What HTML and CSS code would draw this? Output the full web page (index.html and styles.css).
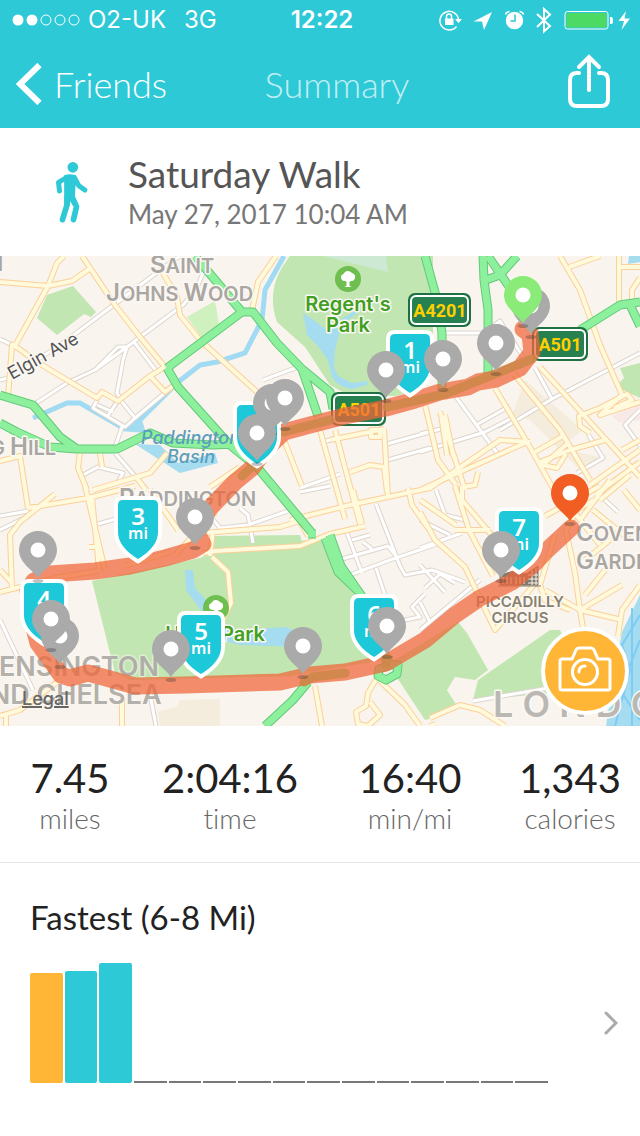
FILE: index.html
```html
<!DOCTYPE html>
<html lang="en">
<head>
<meta charset="utf-8">
<meta name="viewport" content="width=device-width, initial-scale=1">
<title>Summary</title>
<link rel="stylesheet" href="styles.css">
</head>
<body>
<header class="top">
  <div class="status">
    <div class="status-left">
      <svg class="signal" viewBox="0 0 68 12" aria-hidden="true"><g class="sig-full"><circle cx="6" cy="6" r="5.500"/><circle cx="20" cy="6" r="5.500"/></g><g class="sig-empty"><circle cx="34" cy="6" r="5"/><circle cx="48" cy="6" r="5"/><circle cx="62" cy="6" r="5"/></g></svg>
      <span>O2-UK</span><span class="net">3G</span>
    </div>
    <span class="clock">12:22</span>
    <svg class="status-icons" viewBox="438 6 194 28" aria-hidden="true">
      <g class="line"><path d="M456.500 26.500a9.300 9.300 0 1 1 2-6.500"/><path d="M446.500 19v-2.500a2.500 2.500 0 0 1 5 0V19"/></g>
      <path class="solid" d="M445 18.500h8.500V25H445zM455 19h7l-3.500 4.300zM473.500 21.500 492 12l-8 18-2-8.500z"/>
      <circle class="solid" cx="514.500" cy="20.500" r="8.700"/>
      <path class="cut" d="M515 14.500v6.500h-4.500"/>
      <path class="line" d="M505.500 14.500q.5-2.500 4-3M523.500 14.500q-.5-2.500-4-3"/>
      <path class="bt" d="M537 14l13 12-6 5.500V9l6 5.500L537 27"/>
      <rect class="batt" x="565" y="11.500" width="43" height="17.500" rx="2.500"/><rect class="charge" x="566.500" y="13" width="40" height="14.500" rx="1"/>
      <path class="solid" d="M610 17h1.500q1.500 0 1.500 3.500t-1.500 3.500H610zM626 11l-7.500 10h5.500L621.500 30 630 18.500h-5.500z"/>
    </svg>
  </div>
  <nav class="bar">
    <a class="back" href="#friends"><svg viewBox="0 0 26 42" aria-hidden="true"><path d="M23.500 2 4 21l19.500 19"/></svg>Friends</a>
    <h1>Summary</h1>
    <button class="share" type="button" aria-label="Share"><svg viewBox="0 0 42 54" aria-hidden="true"><path d="M11 19H9q-7 0-7 7v19q0 7 7 7h24q7 0 7-7V26q0-7-7-7h-2M21 36V3M11 13 21 3l10 10"/></svg></button>
  </nav>
</header>
<main>
<section class="activity">
  <svg class="walker" viewBox="165 482 98 186" aria-hidden="true"><circle cx="218" cy="501" r="16"/><path class="torso" d="M192 525q17-6 34 0l6 18-6 14-2 36 6 17-11 7-11-17-4 15-12-4z"/><path class="limb" d="M199 532l-24 14 3 26M222 531l14 25 18 13"/><path class="leg" d="M201 590v22l-14 46M217 592l12 27-9 39"/></svg>
  <div><h2>Saturday Walk</h2><p>May 27, 2017 10:04 AM</p></div>
</section>
<section class="map" aria-label="Route map">
<svg class="map-art" viewBox="0 256 640 470" preserveAspectRatio="xMidYMid slice" role="img" aria-label="Walking route through central London">
<defs>
  <g id="white-roads">
    <path d="M33 405 67 383 95 370 127 347 140 337 183 305 196 290 210 256M127 347 123 360 117 393 122 402 135 418M95 370 118 347 127 347M0 380 12 377 67 340 103 313 155 274 180 256M0 339 12 345M134 342 157 372M97 400 93 408 125 427 135 418 173 386M117 402 107 417M122 427 115 447M97 405 113 412M83 475 98 467 123 473 117 484M115 453 147 490"/>
    <path d="M263 380 298 367M320 443 340 437M383 445 430 432M384 461 430 448M300 488 340 474M445 333 485 333 500 321 525 360M420 434 445 428M420 452 485 432 512 418M478 424 510 406M456 397 500 457M535 368 552 399 500 430M552 399 640 353M588 434 603 458 577 473M640 410 625 425 640 446"/>
    <path d="M0 516 28 511M0 530 30 515M98 524 130 515M0 620 33 690M150 694 156 726M212 518 220 528 248 525 288 511M240 508 248 515 253 543M300 492 330 486M346 530 362 573M352 540 370 535M376 504 400 566 405 575 432 570 465 582M342 559 388 546 396 556M350 575 390 560 440 543M363 542 372 549M376 568 388 604M400 621 420 617 412 607 425 594M425 588 440 574 455 583M420 520 450 535M436 490 445 515 465 520M420 548 462 533M420 630 480 580M420 565 445 592M473 701 560 686M605 500 618 512M420 602 430 622"/>
  </g>
  <g id="yellow-roads">
    <path d="M0 282 48 286 72 281 89 269M64 256 57 263 48 286 16 344 12 345 8 397M82 256 115 305 140 337 165 367M12 345 18 348 37 362 97 398 102 392 118 401 150 376 165 367M150 376 165 392 173 386M163 273 177 297 180 315 200 340 257 392M276 256 258 282 252 310M0 461 20 456 28 508M80 452 78 468 87 490M100 453 102 467M93 490 150 473 167 453M136 477 146 490"/>
    <path d="M0 592 60 577 98 571M55 494 20 522 10 535 12 590M0 570 12 583M28 508 88 498 135 486M85 486 105 570M92 498 99 569M89 547H100M125 566 170 552M0 716 20 710 60 680M6 715V726M122 700V726M175 555 215 512M150 490 178 530M203 533 280 527 303 520M203 553 216 551 300 546 330 534 365 526M212 557 228 572 231 603 220 625M213 530 210 556"/>
    <path d="M284 440 302 486M320 430 345 519M335 430 360 524M330 440 384 429M371 430H380V437H371ZM384 429 388 496M350 472 370 465 384 467M290 520 350 505 430 488 500 440 530 442M210 487 240 467M297 516 308 536M353 490 362 524M384 467 387 492M408 488 412 505 428 528"/>
    <path d="M425 405 438 460 456 485M440 412 465 490M441 414 447 455M456 460 453 455 445 415M420 490 527 442M463 487 475 485 478 472M495 388 527 442 554 490M514 374 560 430 590 480M540 367 600 433 640 477M560 256 580 290 600 345 622 395M569 267 600 256M619 256V306M619 267H640M640 278 632 290V303M535 452 563 436 568 443 543 465 557 468 566 454M590 433 580 426 579 416 600 408 627 394 632 400 614 408M605 440 570 450 540 462M622 395 600 415 640 402M590 485 640 450M595 495 640 462M622 450 640 440"/>
    <path d="M420 512 435 540 465 567 495 630 540 578M455 486 469 530 493 576M462 486V500L500 545M420 500 456 525M455 530 490 530M594 500 577 510 566 530 575 573 580 610 585 640M545 590 580 610 622 620M555 535 540 585 545 600 570 610M622 585 580 610M618 636 622 610 640 585M585 560 610 540M585 595 605 570M545 516 600 486M580 520 610 480M593 510 630 540M600 500 630 475M555 488 600 545M624 490 640 510M430 718 460 705 480 710 505 726M436 724 430 726M315 686 322 726M377 678 368 693 366 706 356 712 358 724 368 726 380 715 370 702M377 678 405 705 420 726"/>
  </g>
  <g id="green-roads">
    <path d="M0 395 33 405 60 437 77 449 117 449 150 433 173 443 213 445 234 444M0 423 17 432 50 447 77 449M195 256 242 312 253 312 277 343 302 369 330 392 333 409M167 368 242 312M167 368 178 387 230 445 257 467 312 533M302 369 318 416M308 534 316 534"/>
    <path d="M425 256 438 303 442 333V389M483 256 484 280 488 310V373M488 256 510 288 520 300M517 256 500 275 486 280M580 330 620 305 640 302M630 305 640 326M325 538 338 572 360 593M330 535 341 566 368 605M308 682 293 700 265 726"/>
    <path d="M388 656V666L379 669 378 676 386 680 397 674 398 665 388 664"/>
  </g>
  <g id="pin"><ellipse class="pin-shadow" cx="0" cy="31" rx="5.500" ry="2"/><path d="M0 28C-5 20-19 13-19 0A19 19 0 0 1 19 0C19 13 5 20 0 28Z"/><circle class="hole" r="7.500"/></g>
  <path id="shield" d="M-15 0H15Q20 0 20 5V32C20 45 8 54 0 59C-8 54-20 45-20 32V5Q-20 0-15 0Z"/>
  <g id="tree"><circle class="tree-bg" r="13"/><path class="tree-fg" d="M-1.500 7V2.500L-3 2A4 4 0 0 1-7-2A3 3 0 0 1-4.500-5A5 5 0 0 1 4-6A4 4 0 0 1 7-1Q6 2.500 3 2L1.500 3V7L4 8H-4Z"/></g>
</defs>
<rect class="land" y="256" width="640" height="470"/>
<path class="block" d="M525 380 550 402 583 430 570 440 577 452 603 458 580 470 530 420 512 415ZM158 712 177 707 180 700 220 699V726H160Z"/>
<path class="pink" d="M612 416 640 403V420L620 423Z"/>
<g class="park">
  <path d="M290 256C275 275 268 295 277 322L305 347 330 385 350 396H395L420 390 433 360V256Z"/>
  <path d="M37 318 47 295 73 286 96 312 91 317 84 314 57 335ZM92 581 200 558 212 553 300 541 323 538 346 580 372 610 383 660 290 676 130 680 115 673Z"/>
  <path d="M388 664 420 645 458 622 467 633 488 670 475 680 455 677 447 690 457 706 440 716 425 720Z"/><path d="M473 700 478 680 550 630 560 630 590 690Z"/><path d="M640 363 620 368 624 378 618 384 623 390 640 398Z"/><path d="M213 536 300 535 302 542 213 551Z"/>
</g>
<path class="park-light" d="M187 317 215 301 220 330 205 342Z"/><path class="park-pale" d="M323 256 388 272 386 256Z"/>
<g class="water">
  <path d="M303 313 307 335 317 345 328 360 332 377Q338 387 352 389L367 385 368 381 352 383 338 376 334 367 335 350 338 338 343 323 362 310 353 312 337 322 327 330 312 319ZM185 570 193 570 195 588 215 610 208 620 186 590ZM210 623 240 630 285 627 300 632 318 648 300 647 240 645 212 638ZM135 420 142 420 146 433 120 431ZM135 444 160 445 178 463 215 453 218 463 180 473ZM629 256H640V262L628 264Z"/>
  <path d="M640 595 622 632 613 680 606 726H640Z"/>
</g>
<path class="canal" d="M33 418 67 403 80 403 123 428 137 428M137 423 177 383 200 365 217 362 245 353 262 320 265 290 284 256"/>
<path class="river-lines" d="M640 615 622 645 630 670 615 726M632 608V726M640 640 620 690 640 720"/>
<use href="#white-roads" class="case white-case"/><use href="#white-roads" class="fill white-fill"/>
<use href="#yellow-roads" class="case yellow-case"/><use href="#yellow-roads" class="fill yellow-fill"/>
<use href="#green-roads" class="case green-case"/><use href="#green-roads" class="fill green-fill"/>
<g class="label area">
  <text x="150" y="273"><tspan class="cap">S</tspan>AINT</text><text x="106" y="301"><tspan class="cap">J</tspan>OHNS <tspan class="cap">W</tspan>OOD</text><text x="119" y="506"><tspan class="cap">P</tspan>ADDINGTON</text><text x="-10" y="455">G <tspan class="cap">H</tspan>ILL</text><text x="-12" y="271">N</text><text x="576" y="541"><tspan class="cap">C</tspan>OVENT</text><text x="576" y="569"><tspan class="cap">G</tspan>ARDEN</text>
</g>
<g class="label district"><text x="-20" y="676">KENSINGTON</text><text x="-30" y="704">AND CHELSEA</text></g>
<text class="label city" x="493" y="717">L O N D O N</text>
<text class="label street" transform="translate(12 380) rotate(-29)">Elgin Ave</text>
<g class="label water-label"><text x="141" y="444">Paddington</text><text x="167" y="463">Basin</text></g>
<g class="label park-label"><text x="348" y="311">Regent's</text><text x="348" y="332">Park</text><text x="215" y="641">Hyde Park</text></g>
<use href="#tree" x="348" y="279"/><use href="#tree" x="216" y="608"/>
<g class="sign"><g><rect class="sign-edge" x="409" y="294" width="61" height="32" rx="6"/><rect x="411" y="296" width="57" height="28" rx="5"/><text x="440" y="317">A4201</text></g><g><rect class="sign-edge" x="332" y="393" width="53" height="32" rx="6"/><rect x="334" y="395" width="49" height="28" rx="5"/><text x="359" y="416">A501</text></g><g><rect class="sign-edge" x="533" y="328" width="54" height="32" rx="6"/><rect x="535" y="330" width="50" height="28" rx="5"/><text x="560" y="351">A501</text></g></g>
<g class="piccadilly"><path d="M500 585v-10l14-4 12 3 12-8v19zM498 586h43"/><path class="windows" d="M503 577v7M507 577v7M511 577v7M516 577v7M520 577v7M524 577v7M528 575h10M528 579h10M528 583h10M532 570v15M536 568v17"/></g>
<g class="label place"><text x="520" y="607">PICCADILLY</text><text x="520" y="623">CIRCUS</text></g>
<path class="route" d="M523 329 530 334 532 352 520 368 496 379 478 382 468 387 440 392 415 400 386 408 345 416 310 425 284 432 264 451 252 468 235 482 210 508 195 530 203 544 193 550 165 558 130 566 95 571 50 574 34 581 28 590 32 620 38 643 51 661 61 675 70 678 88 673 110 679 135 686 185 685 280 682 310 675 345 672 386 663 425 640 455 615 480 598 512 582 535 563 545 552 571 528"/>
<path class="route-overlap" d="M284 432 330 420M387 407 445 394 532 359M242 476 264 456M304 682 313 677 345 673M386 656V664"/>
<g class="shields">
  <g transform="translate(410 334)"><use href="#shield"/><text y="25">1</text><text class="mi" y="39">mi</text></g>
  <g transform="translate(257 405)"><use href="#shield"/></g>
  <g transform="translate(138 500)"><use href="#shield"/><text y="25">3</text><text class="mi" y="39">mi</text></g>
  <g transform="translate(44 583)"><use href="#shield"/><text y="25">4</text></g>
  <g transform="translate(201 615)"><use href="#shield"/><text y="25">5</text><text class="mi" y="39">mi</text></g>
  <g transform="translate(374 598)"><use href="#shield"/><text y="25">6</text><text class="mi" y="39">mi</text></g>
  <g transform="translate(519 511)"><use href="#shield"/><text y="25">7</text><text class="mi" y="39">mi</text></g>
</g>
<g class="pins"><use href="#pin" x="531" y="306"/><use href="#pin" x="496" y="343"/><use href="#pin" x="443" y="359"/><use href="#pin" x="386" y="370"/><use href="#pin" x="272" y="403"/><use href="#pin" x="285" y="398"/><use href="#pin" x="257" y="433"/><use href="#pin" x="195" y="517"/><use href="#pin" x="38" y="550"/><use href="#pin" x="60" y="636"/><use href="#pin" x="51" y="619"/><use href="#pin" x="171" y="649"/><use href="#pin" x="303" y="646"/><use href="#pin" x="387" y="626"/><use href="#pin" x="501" y="550"/><use class="start" href="#pin" x="523" y="295"/><use class="end" href="#pin" x="570" y="493"/></g>
</svg>
<a class="legal" href="#legal">Legal</a>
<button class="camera" type="button" aria-label="Add photo"><svg viewBox="0 0 54 46" aria-hidden="true"><path d="M4 13h10l4-9q1-2 3-2h12q2 0 3 2l4 9h10q2 0 2 2v27q0 2-2 2H4q-2 0-2-2V15q0-2 2-2Z"/><circle cx="27" cy="26" r="12.500"/><path d="M21 26q0-6 6-6"/></svg></button>
</section>
<dl class="stats">
  <div><dt>miles</dt><dd>7.45</dd></div><div><dt>time</dt><dd>2:04:16</dd></div><div><dt>min/mi</dt><dd>16:40</dd></div><div><dt>calories</dt><dd>1,343</dd></div>
</dl>
<a class="fastest" href="#splits">
  <h3>Fastest (6-8 Mi)</h3>
  <div class="chart-row">
    <div class="chart"><i class="best" style="height:110px"></i><i class="pace" style="height:112px"></i><i class="pace" style="height:120px"></i><i></i><i></i><i></i><i></i><i></i><i></i><i></i><i></i><i></i><i></i><i></i><i></i></div>
    <svg class="chevron" viewBox="0 0 14 24" aria-hidden="true"><path d="M2 2 12 12 2 22"/></svg>
  </div>
</a>
</main>
</body>
</html>
```

FILE: styles.css
```css
* { box-sizing: border-box; }
body { margin: 0; background: #fff; color: #222; font-family: Lato, "Open Sans", sans-serif; font-variant-ligatures: none; }
h1, h2, h3, p, dl, dd { margin: 0; font-weight: 400; }
a { color: inherit; text-decoration: none; }
button { border: 0; padding: 0; background: none; color: inherit; cursor: pointer; }
svg { display: block; }

.top { background: #2dc9d7; color: #fff; }
.status { display: grid; grid-template-columns: 1fr auto 1fr; align-items: center; height: 40px; padding: 0 8px 0 12px; font: 400 24px/28px Inter, sans-serif; }
.status-left { display: flex; align-items: center; gap: 8px; }
.signal { width: 68px; height: 12px; }
.net { margin-left: 10px; }
.sig-full { fill: #fff; }
.sig-empty { fill: none; stroke: #fff; }
.clock { font-weight: 600; }
.status-icons { width: 194px; height: 28px; justify-self: end; }
.line { fill: none; stroke: #fff; stroke-width: 1.500; }
.solid { fill: #fff; }
.cut { fill: none; stroke: #2dc9d7; stroke-width: 1.500; }
.bt { fill: none; stroke: #fff; stroke-width: 2; }
.batt { fill: none; stroke: #fff; }
.charge { fill: #4cd964; }
.bar { display: grid; grid-template-columns: 1fr auto 1fr; align-items: center; height: 88px; padding: 0 30px 0 16px; }
.back { display: flex; align-items: center; gap: 12px; font-size: 36px; line-height: 44px; font-weight: 300; }
.back svg { width: 26px; height: 42px; fill: none; stroke: #fff; stroke-width: 6; }
.bar h1 { padding-left: 48px; font-size: 36px; line-height: 44px; font-weight: 300; opacity: .7; }
.share { justify-self: end; padding-bottom: 6px; }
.share svg { width: 42px; height: 54px; fill: none; stroke: #fff; stroke-width: 4; stroke-linecap: round; }

.activity { display: flex; align-items: center; gap: 40px; height: 128px; padding: 0 55px; }
.walker { width: 33px; height: 62px; fill: #2dc9d7; }
.limb, .leg { fill: none; stroke: #2dc9d7; stroke-width: 15; stroke-linecap: round; stroke-linejoin: round; }
.leg { stroke-width: 17; }
.activity h2 { font-size: 37px; line-height: 44px; color: #555; }
.activity p { font-size: 26px; line-height: 36px; color: #777; }

.map { position: relative; overflow: hidden; }
.map-art { width: 100%; height: auto; aspect-ratio: 640 / 470; font-family: Inter, sans-serif; }
.land { fill: #f9f4ed; }
.block { fill: #f4ecdd; }
.pink { fill: #f9e9e6; }
.park { fill: #c2e6b2; }
.park-light { fill: #cff0bf; }
.park-pale { fill: #cde9d3; }
.water { fill: #a5dcf0; }
.canal { fill: none; stroke: #a0daf3; stroke-width: 5; }
.river-lines { fill: none; stroke: #7ecbf5; stroke-width: 2; }
.case, .fill { fill: none; stroke-linejoin: round; }
.white-case { stroke: #dcd5cd; stroke-width: 5; }
.white-fill { stroke: #fff; stroke-width: 3; }
.yellow-case { stroke: #fbd09a; stroke-width: 6; }
.yellow-fill { stroke: #fffadb; stroke-width: 4; }
.green-case { stroke: #62c97a; stroke-width: 9; }
.green-fill { stroke: #8df09c; stroke-width: 7; }
.label { paint-order: stroke; stroke: #fbf8f4; stroke-width: 3; stroke-linejoin: round; }
.area { font-size: 20px; font-weight: 600; fill: #aaa6a2; }
.cap { font-size: 24px; }
.district { font-size: 27px; font-weight: 600; fill: #aaa6a2; fill-opacity: .9; stroke-opacity: .5; }
.city { font-size: 36px; font-weight: 600; fill: #bbb8b4; }
.street { font-size: 18px; fill: #555; }
.water-label { font-size: 18px; font-style: italic; font-weight: 500; fill: #5b9dbc; stroke: none; }
.park-label { font-size: 20px; font-weight: 600; fill: #419f22; text-anchor: middle; }
.place { font-size: 15px; font-weight: 600; fill: #88806f; text-anchor: middle; }
.tree-bg { fill: #6fbe50; }
.tree-fg { fill: #fff; }
.sign rect { fill: #26804f; stroke: #fff; stroke-width: 2; }
.sign .sign-edge { fill: #26804f; stroke: #1f7043; stroke-width: 2; }
.sign text { font: 700 18px "Liberation Sans Narrow", Roboto, sans-serif; fill: #ffd000; text-anchor: middle; }
.piccadilly { fill: #81796d; stroke: #81796d; }
.windows { stroke: #f9f4ed; }
.route { fill: none; stroke: #ef683c; stroke-opacity: .74; stroke-width: 17; stroke-linejoin: round; stroke-linecap: round; }
.route-overlap { fill: none; stroke: #cc8748; stroke-opacity: .85; stroke-width: 9; stroke-linecap: round; stroke-linejoin: round; }
.shields use { fill: #1dc8d9; stroke: #fff; stroke-width: 8; paint-order: stroke; }
.shields text { fill: #fff; font-family: "Noto Sans", sans-serif; font-size: 24px; font-weight: 600; text-anchor: middle; }
.shields .mi { font-size: 16px; }
.pins { fill: #aaa; }
.pin-shadow { fill: #333; fill-opacity: .3; }
.hole { fill: #fff; }
.start { fill: #8aeb78; }
.end { fill: #f15d22; }
.legal { position: absolute; left: 22px; bottom: 16px; font: 500 18px/22px Inter, sans-serif; color: #666; text-decoration: underline; text-decoration-thickness: 2px; }
.camera { position: absolute; right: 11px; bottom: 11px; display: grid; place-items: center; width: 88px; height: 88px; border: 4px solid #fff; border-radius: 50%; background: #ffb636; }
.camera svg { width: 54px; height: 46px; fill: none; stroke: #fff; stroke-width: 3; stroke-linecap: round; margin-bottom: 4px; }

.stats { display: grid; grid-template-columns: 7fr 9fr 9fr 7fr; padding: 28px 0; border-bottom: 1px solid #e8e8e8; text-align: center; }
.stats div { display: flex; flex-direction: column-reverse; }
.stats dd { font-size: 40px; line-height: 48px; color: #222; }
.stats dt { font-size: 28px; line-height: 32px; font-weight: 300; color: #666; }

.fastest { display: block; padding: 34px 22px 53px 30px; }
.fastest h3 { font-size: 33px; line-height: 40px; }
.chart-row { display: flex; align-items: center; justify-content: space-between; gap: 56px; margin-top: 26px; }
.chart { flex: 1; display: flex; align-items: flex-end; gap: 2px; height: 120px; }
.chart i { flex: 1; height: 2px; background: #777; }
.chart .best, .chart .pace { border-radius: 2px; background: #2dc9d7; }
.chart .best { background: #ffb636; }
.chevron { width: 14px; height: 24px; fill: none; stroke: #aaa; stroke-width: 3; stroke-linecap: round; }
```
